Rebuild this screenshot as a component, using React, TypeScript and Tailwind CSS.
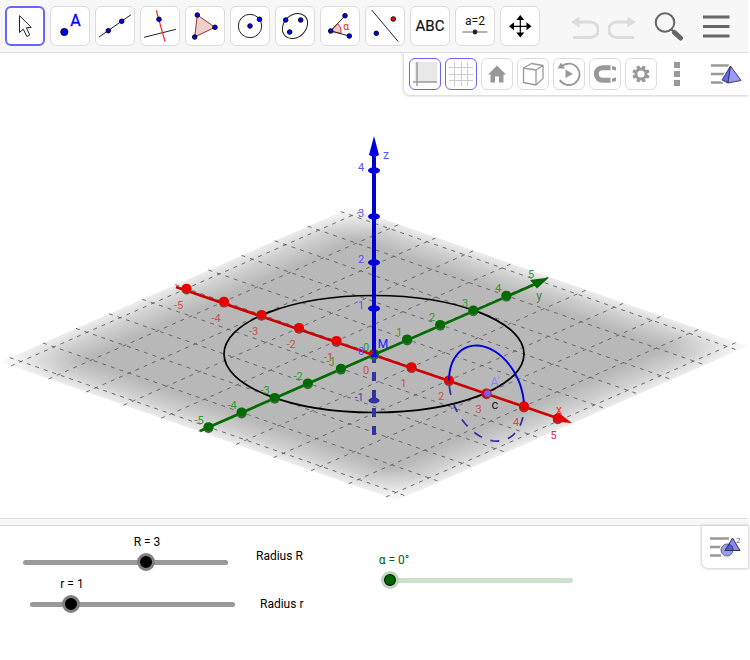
import React, { FC, ReactNode, useState } from "react";

const BLUE = "#0000ff";

// projection of the 3D scene onto the view
const ORIGIN = [374, 301];
const UX = [37.5, 13.1];
const UY = [33.1, -14.6];
const UZ = 46;
const EDGE = 5.3;

const project = (x: number, y: number, z = 0) => [
  ORIGIN[0] + x * UX[0] + y * UY[0],
  ORIGIN[1] + x * UX[1] + y * UY[1] - z * UZ,
];

const TICKS = [-5, -4, -3, -2, -1, 0, 1, 2, 3, 4, 5];

const Dot: FC<{ x: number; y: number; r?: number; fill?: string }> = ({ x, y, r = 2.3, fill = BLUE }) => (
  <circle cx={x} cy={y} r={r} fill={fill} stroke="#000" strokeWidth="0.9" />
);

interface Tool {
  name: string;
  icon: ReactNode;
}

const tools: Tool[] = [
  {
    name: "Move",
    icon: <path d="M14.5 9.7V26.5L18.3 23.2L21.8 30.5L24.8 29L21.4 21.8L26.3 21.4Z" fill="#fff" stroke="#222" strokeWidth="1" />,
  },
  {
    name: "Point",
    icon: (
      <>
        <Dot x={14.3} y={26} r={3.6} />
        <text x="25.5" y="20" textAnchor="middle" fontSize="16" fill={BLUE} stroke={BLUE} strokeWidth="0.3">A</text>
      </>
    ),
  },
  {
    name: "Line",
    icon: (
      <>
        <path d="M4 31L36 8.7" stroke="#222" />
        <Dot x={13.3} y={24.7} />
        <Dot x={26.7} y={15.3} />
      </>
    ),
  },
  {
    name: "Perpendicular Line",
    icon: (
      <>
        <path d="M4 31.3L36 23.3" stroke="#222" />
        <path d="M16.3 4.3L25 35.7" stroke="#ff2020" strokeWidth="1.2" />
        <Dot x={19} y={13.3} />
      </>
    ),
  },
  {
    name: "Polygon",
    icon: (
      <>
        <path d="M12.3 9L30 21.3L9.7 31Z" fill="#ebd0cc" stroke="#a03030" />
        <Dot x={12.3} y={9} />
        <Dot x={30} y={21.3} />
        <Dot x={9.7} y={31} />
      </>
    ),
  },
  {
    name: "Circle with Center through Point",
    icon: (
      <>
        <circle cx="20" cy="20" r="11.7" fill="none" stroke="#222" />
        <Dot x={20} y={20} />
        <Dot x={29.5} y={13.3} />
      </>
    ),
  },
  {
    name: "Ellipse",
    icon: (
      <>
        <ellipse cx="20" cy="20" rx="14" ry="11" transform="rotate(-45 20 20)" fill="none" stroke="#222" />
        <Dot x={10.7} y={14} />
        <Dot x={25.7} y={14} />
        <Dot x={14.7} y={26} />
      </>
    ),
  },
  {
    name: "Angle",
    icon: (
      <>
        <path d="M10.7 25L17.7 17.5A10.5 10.5 0 0 1 21 27.5Z" fill="#f4c8c8" stroke="#e03030" />
        <path d="M25 9.7L10.7 25L29.3 30" fill="none" stroke="#222" />
        <Dot x={10.7} y={25} />
        <Dot x={25} y={9.7} />
        <Dot x={29.3} y={30} />
        <text x="26" y="24" textAnchor="middle" fontSize="10" fill="#e02020">α</text>
      </>
    ),
  },
  {
    name: "Reflect about Line",
    icon: (
      <>
        <path d="M6.7 4L33.3 35.7" stroke="#222" />
        <Dot x={28.3} y={13} fill="#ff0000" />
        <Dot x={11.3} y={27.3} />
      </>
    ),
  },
  {
    name: "Text",
    icon: <text x="20" y="25" textAnchor="middle" fontSize="15" fill="#111" stroke="#111" strokeWidth="0.2">ABC</text>,
  },
  {
    name: "Slider",
    icon: (
      <>
        <text x="20" y="19" textAnchor="middle" fontSize="12" fill="#111">a=2</text>
        <path d="M7.5 26H32.5" stroke="#666" />
        <circle cx="20" cy="26" r="2.4" fill="#223" />
      </>
    ),
  },
  {
    name: "Move Graphics View",
    icon: (
      <>
        <path d="M20.3 12V29M12 20.3H29" stroke="#000" strokeWidth="1.2" />
        <path d="M20.3 9L24.3 14H16.3ZM20.3 31.5L24.3 26.5H16.3ZM9 20.3L14 16.3V24.3ZM31.5 20.3L26.5 16.3V24.3Z" fill="#000" />
      </>
    ),
  },
];

interface StyleTool extends Tool {
  active?: boolean;
}

const styleTools: StyleTool[] = [
  {
    name: "Show axes",
    active: true,
    icon: (
      <>
        <path d="M6 4H28V24H6Z" fill="#e8e8e8" />
        <path d="M8 4V28M4 24H28" stroke="#999" strokeWidth="1.4" />
      </>
    ),
  },
  {
    name: "Show grid",
    active: true,
    icon: <path d="M9.5 4V28M16.5 4V28M22.5 4V28M4 9.5H28M4 16.5H28M4 22.5H28" stroke="#ccc" />,
  },
  {
    name: "Standard view",
    icon: <path d="M16 7.5L25 16.5H22.5V24.5H18V18.5H14V24.5H9.5V16.5H7Z" fill="#999" />,
  },
  {
    name: "Clipping",
    icon: (
      <path
        d="M6.5 10L19 12V27L6.5 24.5ZM6.5 10L14.5 5.5L26 7.5L19 12M26 7.5V20.5L19 27"
        fill="none"
        stroke="#999"
        strokeWidth="1.3"
        strokeLinejoin="round"
      />
    ),
  },
  {
    name: "Rotate view",
    icon: (
      <>
        <path d="M8.5 8.5A10.7 10.7 0 1 1 6.8 22" fill="none" stroke="#999" strokeWidth="1.8" />
        <path d="M4.5 10.5L8 4.5L12 10.5ZM12.5 11.5L20 16L12.5 20Z" fill="#999" />
      </>
    ),
  },
  {
    name: "Point capturing",
    icon: (
      <>
        <path d="M21.5 9.8H13.5A6.2 6.2 0 0 0 13.5 22.2H21.5" fill="none" stroke="#999" strokeWidth="5" />
        <path d="M23 8L27 9V12.5L23 11.5ZM23 20.5L27 19.5V23L23 24Z" fill="#999" />
      </>
    ),
  },
  {
    name: "Settings",
    icon: (
      <>
        <circle cx="16" cy="16" r="5" fill="none" stroke="#999" strokeWidth="2.8" />
        {[22.5, 67.5, 112.5, 157.5, 202.5, 247.5, 292.5, 337.5].map((a) => (
          <path key={a} d="M14.3 7.4H17.7V11H14.3Z" fill="#999" transform={`rotate(${a} 16 16)`} />
        ))}
      </>
    ),
  },
];

const Toolbar: FC = () => (
  <header className="flex items-center h-[53px] pl-[5px] pr-[18px] bg-[#f7f7f7] border-b border-[#dcdcdc]">
    <div className="flex gap-[5px]">
      {tools.map((tool, i) => (
        <button
          key={tool.name}
          aria-label={tool.name}
          className={
            i === 0
              ? "flex items-center justify-center size-10 shrink-0 bg-white rounded-md border-2 border-[#6666ff]"
              : "flex items-center justify-center size-10 shrink-0 bg-white rounded-md border border-[#dcdcdc]"
          }
        >
          <svg viewBox="2 2 36 36" className="size-9 shrink-0">{tool.icon}</svg>
        </button>
      ))}
    </div>
    <div className="flex items-center gap-[18px] ml-auto">
      <div className="flex gap-[9px]">
        <button aria-label="Undo">
          <svg viewBox="0 0 28 28" className="size-7">
            <path d="M7 10H19.5A7.8 7.8 0 0 1 19.5 25.6H2" fill="none" stroke="#dcdcdc" strokeWidth="3" />
            <path d="M0 10L8.5 4.5V15.5Z" fill="#dcdcdc" />
          </svg>
        </button>
        <button aria-label="Redo">
          <svg viewBox="0 0 28 28" className="size-7">
            <path d="M21 10H8.5A7.8 7.8 0 0 0 8.5 25.6H26" fill="none" stroke="#dcdcdc" strokeWidth="3" />
            <path d="M28 10L19.5 4.5V15.5Z" fill="#dcdcdc" />
          </svg>
        </button>
      </div>
      <button aria-label="Search">
        <svg viewBox="0 0 30 30" className="size-[30px]">
          <circle cx="11" cy="11.5" r="9.3" fill="none" stroke="#666" strokeWidth="2" />
          <path d="M17.5 18.5L20.5 21.5" stroke="#666" strokeWidth="2" />
          <path d="M20.5 21.5L26.5 27" stroke="#666" strokeWidth="5" strokeLinecap="round" />
        </svg>
      </button>
      <button aria-label="Menu">
        <svg viewBox="0 0 28 28" className="size-7">
          <path d="M1 5H27.5M1 14.5H27.5M1 24H27.5" stroke="#666" strokeWidth="3" />
        </svg>
      </button>
    </div>
  </header>
);

const StyleBar: FC = () => (
  <div className="absolute top-0 right-0 flex items-center h-[42px] w-[344px] pl-[5px] pr-[5px] bg-white rounded-bl-md shadow-[0_0_3px_1px_#d0d0d0] [clip-path:inset(0_0_-5px_-5px)]">
    <div className="flex gap-1">
      {styleTools.map((tool) => (
        <button
          key={tool.name}
          aria-label={tool.name}
          aria-pressed={!!tool.active}
          className={
            tool.active
              ? "flex items-center justify-center size-8 shrink-0 rounded-md border border-[#6666ff]"
              : "flex items-center justify-center size-8 shrink-0 rounded-md border border-[#dcdcdc]"
          }
        >
          <svg viewBox="1 1 30 30" className="size-[30px] shrink-0">{tool.icon}</svg>
        </button>
      ))}
    </div>
    <button aria-label="More" className="ml-[17px]">
      <svg viewBox="0 0 6 24" className="w-[6px] h-6">
        <path d="M0 0H6V6H0ZM0 9H6V15H0ZM0 18H6V24H0Z" fill="#999" />
      </svg>
    </button>
    <button aria-label="Close style bar" className="ml-auto">
      <svg viewBox="0 0 32 24" className="w-8 h-6">
        <path d="M0 3.5H18M0 12H14M0 20.5H12" stroke="#999" strokeWidth="2.4" />
        <path d="M19 1L9 19L17 23L33 20Z" fill="#fff" />
        <path d="M19.5 4L11 18L17 21Z" fill="#6666ff" stroke="#333" strokeWidth="0.9" />
        <path d="M19.5 4L17 21L30 18.5Z" fill="#9999ff" stroke="#333" strokeWidth="0.9" />
      </svg>
    </button>
  </div>
);

const GridLine: FC<{ from: number[]; to: number[] }> = ({ from, to }) => (
  <line x1={from[0]} y1={from[1]} x2={to[0]} y2={to[1]} />
);

const Label: FC<{ at: number[]; fill: string; size?: number; children: ReactNode }> = ({ at, fill, size = 11, children }) => (
  <text x={at[0]} y={at[1]} fill={fill} fontSize={size} textAnchor="middle" dominantBaseline="central">
    {children}
  </text>
);

// circle of radius r around (3, 0, 0) in the xz plane
const center = project(3, 0);
const meridian = (from: number, to: number) => {
  const points: string[] = [];
  for (let a = from; a <= to; a += 5) {
    const t = (a * Math.PI) / 180;
    const x = center[0] + Math.cos(t) * UX[0];
    const y = center[1] + Math.cos(t) * UX[1] - Math.sin(t) * UZ;
    points.push(`${x.toFixed(1)},${y.toFixed(1)}`);
  }
  return points.join(" ");
};

const fadeStops = (
  <>
    <stop offset="0" stopColor="#fff" stopOpacity="0.25" />
    <stop offset="0.05" stopColor="#fff" stopOpacity="0.68" />
    <stop offset="0.11" stopColor="#fff" />
    <stop offset="0.89" stopColor="#fff" />
    <stop offset="0.95" stopColor="#fff" stopOpacity="0.68" />
    <stop offset="1" stopColor="#fff" stopOpacity="0.25" />
  </>
);

const Scene: FC = () => (
  <svg viewBox="0 0 748 465" preserveAspectRatio="xMidYMid meet" className="block w-full h-auto" role="img" aria-label="3D Graphics">
    <defs>
      <linearGradient id="fadeX" x1="0" y1="0" x2="1" y2="0">{fadeStops}</linearGradient>
      <linearGradient id="fadeY" x1="0" y1="0" x2="0" y2="1">{fadeStops}</linearGradient>
      <mask id="maskX" maskUnits="userSpaceOnUse" x="-6" y="-6" width="12" height="12">
        <rect x={-EDGE} y={-EDGE} width={EDGE * 2} height={EDGE * 2} fill="url(#fadeX)" />
      </mask>
      <mask id="maskY" maskUnits="userSpaceOnUse" x="-6" y="-6" width="12" height="12">
        <rect x={-EDGE} y={-EDGE} width={EDGE * 2} height={EDGE * 2} fill="url(#fadeY)" />
      </mask>
    </defs>

    <g transform={`matrix(${UX[0]} ${UX[1]} ${UY[0]} ${UY[1]} ${ORIGIN[0]} ${ORIGIN[1]})`}>
      <g mask="url(#maskX)">
        <g mask="url(#maskY)">
          <rect x={-EDGE} y={-EDGE} width={EDGE * 2} height={EDGE * 2} fill="#b8b8b8" />
        </g>
      </g>
    </g>

    <g stroke="#606060" strokeWidth="0.9" strokeDasharray="4 5">
      {TICKS.map((t) => (
        <g key={t}>
          <GridLine from={project(t, -EDGE)} to={project(t, EDGE)} />
          <GridLine from={project(-EDGE, t)} to={project(EDGE, t)} />
        </g>
      ))}
    </g>

    <ellipse cx="374" cy="301" rx="150" ry="58.5" fill="none" stroke="#000" strokeWidth="1.7" />

    {/* part of the z axis below the plane */}
    <path d="M374 301V384" stroke="#3333a0" strokeWidth="4" strokeDasharray="9 9" />
    <ellipse cx="374" cy="347.5" rx="5.5" ry="3" fill="#3333a0" />

    <polyline points={meridian(180, 360)} fill="none" stroke="#3333a0" strokeWidth="1.8" strokeDasharray="9 9" strokeDashoffset="-6" />

    {/* x axis */}
    <path d="M176 234L560 366" stroke="#cc0000" strokeWidth="2.7" />
    <path d="M557.5 359L572 370L553 368.5Z" fill="#e60000" />
    {/* y axis */}
    <path d="M200 378L540 229" stroke="#006b00" strokeWidth="2.7" />
    <path d="M530 227L549 224.5L537 235.5Z" fill="#006600" />
    {TICKS.map((t) => {
      const [x, y] = t === 5 ? project(4.9, 0) : project(t, 0);
      return (
        <g key={t}>
          <circle cx={x} cy={y + 1} r="5" fill="#a03232" />
          <ellipse cx={x} cy={y - 0.5} rx="5" ry="4.3" fill="#e60000" />
        </g>
      );
    })}
    {TICKS.filter((t) => t < 5).map((t) => {
      const [x, y] = project(0, t);
      return (
        <g key={t}>
          <circle cx={x} cy={y + 1} r="5" fill="#336b33" />
          <ellipse cx={x} cy={y - 0.5} rx="5" ry="4.3" fill="#006b00" />
        </g>
      );
    })}

    {/* z axis */}
    <path d="M374 301V100" stroke="#0000cc" strokeWidth="4" />
    <path d="M374 83L379 102Q374 105 369 102Z" fill="#0000e0" />
    {[1, 2, 3, 4].map((t) => (
      <ellipse key={t} cx="374" cy={301.5 - t * UZ} rx="6" ry="3.3" fill="#0000dd" />
    ))}
    <path d="M369 300L374 296L372 305Z" fill="#e60000" />
    <path d="M374 296L378 304H371Z" fill="#0000ff" />

    <polyline points={meridian(0, 180)} fill="none" stroke="#0000dd" strokeWidth="1.9" />
    <circle cx="524" cy="353" r="4.5" fill="#e60000" />
    <circle cx="487.5" cy="340.5" r="3.3" fill="#6666ff" />

    {TICKS.map((t) => (
      <Label key={t} at={[366 + t * 37.5, 317 + t * 13]} fill={t === 5 ? "#e03030" : "#c4544c"}>{t}</Label>
    ))}
    {TICKS.map((t) => (
      <Label key={t} at={[t < 0 ? 364 + t * 33 : 366 + t * 33, 294 - t * 14.6]} fill="#2f9a2f">{t}</Label>
    ))}
    {[-1, 0, 1, 2, 3, 4].map((t) => (
      <Label key={t} at={[t < 0 ? 359 : 361, 298 - t * UZ]} fill={t < 0 ? "#4040b0" : "#5555ff"}>{t}</Label>
    ))}
    <Label at={[386, 102]} fill="#5555ff" size={12}>z</Label>
    <Label at={[559, 357]} fill="#ff3030" size={12}>x</Label>
    <Label at={[539, 243]} fill="#3f7f3f" size={12}>y</Label>
    <Label at={[383, 291]} fill="#2222ff" size={12}>M</Label>
    <Label at={[495, 329]} fill="#8888ff" size={12}>A'</Label>
    <Label at={[495, 351]} fill="#222" size={13}>c</Label>
  </svg>
);

interface SliderProps {
  id: string;
  name: string;
  unit?: string;
  max: number;
  initial: number;
  green?: boolean;
}

const Slider: FC<SliderProps> = ({ id, name, unit = "", max, initial, green }) => {
  const [value, setValue] = useState(initial);

  return (
    <div className="relative pt-5">
      <div className="absolute top-0 inset-x-[9px] h-4">
        <label
          htmlFor={id}
          className={
            green
              ? "absolute -translate-x-1/2 ml-1 mt-px whitespace-nowrap text-xs text-[#006400]"
              : "absolute -translate-x-1/2 ml-px mt-px whitespace-nowrap text-xs text-black"
          }
          style={{ left: `${(value / max) * 100}%` }}
        >
          {name} = {value}{unit}
        </label>
      </div>
      <div className="relative h-[18px] flex items-center">
        <div
          className={
            green
              ? "absolute inset-x-[9px] h-[5px] rounded-full bg-[#cce0cc]"
              : "absolute inset-x-[9px] h-[5px] rounded-full bg-[#999999]"
          }
        />
        <input
          id={id}
          type="range"
          min={0}
          max={max}
          step={green ? 1 : 0.1}
          value={value}
          onChange={(e) => setValue(Number(e.target.value))}
          className={
            green
              ? "relative w-full h-[18px] appearance-none bg-transparent [&::-webkit-slider-thumb]:appearance-none [&::-webkit-slider-thumb]:size-[18px] [&::-webkit-slider-thumb]:rounded-full [&::-webkit-slider-thumb]:border-3 [&::-webkit-slider-thumb]:border-[#bcd6bc] [&::-webkit-slider-thumb]:bg-[#006400] [&::-webkit-slider-thumb]:shadow-[inset_0_0_0_1px_#000]"
              : "relative w-full h-[18px] appearance-none bg-transparent [&::-webkit-slider-thumb]:appearance-none [&::-webkit-slider-thumb]:size-[18px] [&::-webkit-slider-thumb]:rounded-full [&::-webkit-slider-thumb]:border-3 [&::-webkit-slider-thumb]:border-[#808080] [&::-webkit-slider-thumb]:bg-black"
          }
        />
      </div>
    </div>
  );
};

const GraphicsView: FC = () => (
  <section className="relative h-[134px] bg-white">
    <div className="absolute left-[14px] top-[7px] w-[223px]">
      <Slider id="R" name="R" max={5} initial={3} />
    </div>
    <p className="absolute left-[256px] top-[22px] text-xs">Radius R</p>
    <div className="absolute left-[21px] top-[49px] w-[223px]">
      <Slider id="r" name="r" max={5} initial={1} />
    </div>
    <p className="absolute left-[260px] top-[70px] text-xs">Radius r</p>
    <div className="absolute left-[381px] top-[25px] w-[201px]">
      <Slider id="alpha" name="α" unit="°" max={360} initial={0} green />
    </div>
    <button
      aria-label="Open style bar"
      className="absolute top-0 right-0 flex items-center justify-center w-[46px] h-[42px] bg-white rounded-bl-md shadow-[0_0_3px_1px_#d0d0d0]"
    >
      <svg viewBox="0 0 32 24" className="w-8 h-6">
        <path d="M1 3.5H20M1 12H12M1 20.5H12" stroke="#999" strokeWidth="2.4" />
        <circle cx="18" cy="15" r="7.5" fill="#fff" />
        <circle cx="18" cy="15" r="6" fill="#9999ff" stroke="#666" />
        <path d="M23.5 3L31 15.5H16Z" fill="#8888ff" stroke="#333" />
        <path d="M20.3 9.3A6 6 0 0 1 24 15.5H16Z" fill="#5555ee" stroke="#333" strokeWidth="0.8" />
        <text x="27" y="8" fontSize="8" fill="#666">2</text>
      </svg>
    </button>
  </section>
);

const App: FC = () => {
  return (
    <main className="mr-[2px] bg-white text-black font-['Roboto',sans-serif]">
      <Toolbar />
      <section className="relative">
        <Scene />
        <StyleBar />
      </section>
      <div className="h-2 bg-[#f7f7f7] border-y border-[#dcdcdc]" />
      <GraphicsView />
    </main>
  );
};

export default App;
